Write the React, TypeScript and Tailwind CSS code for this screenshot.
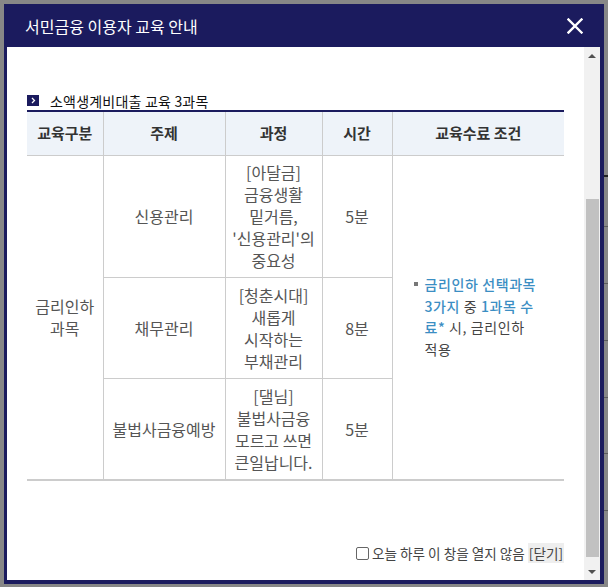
import React from 'react';

const Blue: React.FC<{ children: React.ReactNode }> = ({ children }) => (
  <span className="text-[#3b8ec3] font-medium">{children}</span>
);

const App: React.FC = () => {
  return (
    <div
      className="w-[608px] h-[587px] bg-[#878787] flex overflow-hidden"
      style={{ fontFamily: "'Noto Sans CJK KR', 'Noto Sans', sans-serif" }}
    >
      {/* popup window */}
      <div className="mt-[4px] ml-[4px] w-[600px] h-[580px] bg-[#1b1b5e] flex flex-col pl-[3px] pr-[4px] pb-[4px] shrink-0">
        <div className="h-[43px] flex items-center justify-between pl-[18px] pr-[17px]">
          <h1 className="text-white text-[16px] leading-none">서민금융 이용자 교육 안내</h1>
          <button className="w-[16px] h-[16px] mt-[1px]">
            <svg viewBox="0 0 16 16" width="16" height="16">
              <path d="M1.5 1.5 L14.5 14.5 M14.5 1.5 L1.5 14.5" stroke="white" strokeWidth="2.4" strokeLinecap="square" />
            </svg>
          </button>
        </div>

        <div className="flex h-[533px]">
          {/* content */}
          <div className="flex-1 bg-white px-[20px] pt-[44px]">
            <div className="flex items-center h-[19px]">
              <span className="w-[12px] h-[11px] bg-[#1b1b5e] flex items-center justify-center">
                <svg viewBox="0 0 6 8" width="5" height="7">
                  <path d="M1.2 1 L4.2 4 L1.2 7" stroke="white" strokeWidth="1.5" fill="none" />
                </svg>
              </span>
              <h2 className="ml-[11px] text-[14px] text-[#111] tracking-[0.2px] leading-none">소액생계비대출 교육 3과목</h2>
            </div>

            <table className="w-[537px] table-fixed border-collapse text-center">
              <colgroup>
                <col className="w-[76px]" />
                <col className="w-[122px]" />
                <col className="w-[97px]" />
                <col className="w-[70px]" />
                <col className="w-[172px]" />
              </colgroup>
              <thead>
                <tr className="h-[44px] bg-[#eef3f9]">
                  {['교육구분', '주제', '과정', '시간', '교육수료 조건'].map((h, i) => (
                    <th
                      key={h}
                      className={`border-t-2 border-t-[#1b1b5e] border-b border-b-[#cccccc] ${
                        i < 4 ? 'border-r border-r-[#cccccc]' : ''
                      } text-[15px] font-bold text-[#333]`}
                    >
                      {h}
                    </th>
                  ))}
                </tr>
              </thead>
              <tbody className="text-[16px] leading-[22px] text-[#555]">
                <tr className="h-[122px]">
                  <td rowSpan={3} className="border-r border-[#cccccc] border-b-2 border-b-[#cccccc]">
                    금리인하
                    <br />
                    과목
                  </td>
                  <td className="border-r border-b border-[#cccccc]">신용관리</td>
                  <td className="border-r border-b border-[#cccccc]">
                    [아달금]
                    <br />
                    금융생활
                    <br />
                    밑거름,
                    <br />
                    '신용관리'의
                    <br />
                    중요성
                  </td>
                  <td className="border-r border-b border-[#cccccc]">5분</td>
                  <td
                    rowSpan={3}
                    className="border-b-2 border-b-[#cccccc] text-left pl-[32px] pr-[8px] text-[14px] tracking-[0.6px] leading-[21.5px] text-[#444]"
                  >
                    <p>
                      <span className="inline-block w-[4px] h-[4px] bg-[#777] -ml-[11px] mr-[7px] mb-[5px] align-middle" />
                      <Blue>금리인하 선택과목</Blue>
                    </p>
                    <p>
                      <Blue>3가지</Blue> 중 <Blue>1과목 수</Blue>
                    </p>
                    <p>
                      <Blue>료*</Blue> 시, 금리인하
                    </p>
                    <p>적용</p>
                  </td>
                </tr>
                <tr className="h-[101px]">
                  <td className="border-r border-b border-[#cccccc]">채무관리</td>
                  <td className="border-r border-b border-[#cccccc]">
                    [청춘시대]
                    <br />
                    새롭게
                    <br />
                    시작하는
                    <br />
                    부채관리
                  </td>
                  <td className="border-r border-b border-[#cccccc]">8분</td>
                </tr>
                <tr className="h-[102px]">
                  <td className="border-r border-[#cccccc] border-b-2 border-b-[#cccccc]">불법사금융예방</td>
                  <td className="border-r border-[#cccccc] border-b-2 border-b-[#cccccc]">
                    [댈님]
                    <br />
                    불법사금융
                    <br />
                    모르고 쓰면
                    <br />
                    큰일납니다.
                  </td>
                  <td className="border-r border-[#cccccc] border-b-2 border-b-[#cccccc]">5분</td>
                </tr>
              </tbody>
            </table>

            <div className="mt-[63px] h-[18px] flex items-center justify-end text-[13.6px] text-[#444]">
              <input
                type="checkbox"
                className="appearance-none w-[13px] h-[13px] border border-[#666] rounded-[2px] bg-white mr-[3px]"
              />
              <span>오늘 하루 이 창을 열지 않음</span>
              <span className="ml-[3px] bg-[#eeeeee] px-[1px]">[닫기]</span>
            </div>
          </div>

          {/* scrollbar */}
          <div className="w-[16px] bg-[#f1f1f1] flex flex-col">
            <div className="h-[17px] flex items-center justify-center">
              <span className="w-0 h-0 border-l-[4px] border-r-[4px] border-b-[4px] border-l-transparent border-r-transparent border-b-[#505050]" />
            </div>
            <div className="flex-1 flex flex-col">
              <div className="mt-[135px] h-[358px] ml-[2px] mr-[1px] bg-[#c1c1c1]" />
            </div>
            <div className="h-[17px] flex items-center justify-center">
              <span className="w-0 h-0 border-l-[4px] border-r-[4px] border-t-[4px] border-l-transparent border-r-transparent border-t-[#505050]" />
            </div>
          </div>
        </div>
      </div>

      {/* page behind the overlay */}
      <div className="flex-1 flex flex-col">
        <div className="h-[175px]" />
        <div className="h-[2px] bg-[#222]" />
        <div className="h-[49px]" />
        <div className="h-[1px] bg-[#5c5c5c]" />
        <div className="h-[56px]" />
        <div className="h-[1px] bg-[#5c5c5c]" />
        <div className="h-[56px]" />
        <div className="h-[1px] bg-[#5c5c5c]" />
        <div className="h-[56px]" />
        <div className="h-[1px] bg-[#5c5c5c]" />
        <div className="h-[55px]" />
        <div className="h-[1px] bg-[#5c5c5c]" />
        <div className="h-[56px]" />
        <div className="h-[1px] bg-[#5c5c5c]" />
      </div>
    </div>
  );
};

export default App;
